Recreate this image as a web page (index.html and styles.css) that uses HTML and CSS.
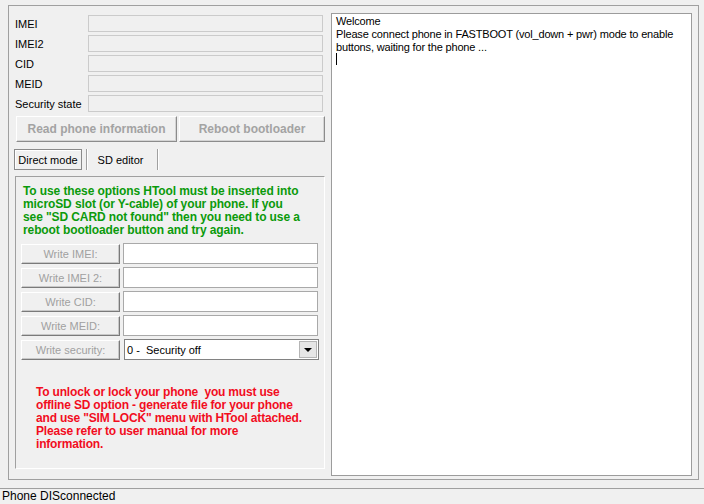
FILE: index.html
```html
<!DOCTYPE html>
<html lang="en">
<head>
    <meta charset="UTF-8">
    <title>HTool</title>
    <link rel="stylesheet" href="styles.css">
</head>
<body>
    <div class="frame">
        <div class="left-side">
            <div class="info-row"><span class="info-label">IMEI</span><span class="info-box"></span></div>
            <div class="info-row"><span class="info-label">IMEI2</span><span class="info-box"></span></div>
            <div class="info-row"><span class="info-label">CID</span><span class="info-box"></span></div>
            <div class="info-row"><span class="info-label">MEID</span><span class="info-box"></span></div>
            <div class="info-row"><span class="info-label">Security state</span><span class="info-box"></span></div>

            <div class="actions">
                <button class="action-btn read-btn" disabled>Read phone information</button>
                <button class="action-btn reboot-btn" disabled>Reboot bootloader</button>
            </div>

            <div class="tabs">
                <span class="tab tab-active">Direct mode</span>
                <span class="tab-sep"></span>
                <span class="tab">SD editor</span>
                <span class="tab-sep"></span>
            </div>

            <div class="tab-page">
                <p class="note-green">To use these options HTool must be inserted into<br>microSD slot (or Y-cable) of your phone. If you<br>see "SD CARD not found" then you need to use a<br>reboot bootloader button and try again.</p>

                <div class="write-row"><button class="write-btn" disabled>Write IMEI:</button><input class="write-input" type="text"></div>
                <div class="write-row"><button class="write-btn" disabled>Write IMEI 2:</button><input class="write-input" type="text"></div>
                <div class="write-row"><button class="write-btn" disabled>Write CID:</button><input class="write-input" type="text"></div>
                <div class="write-row"><button class="write-btn" disabled>Write MEID:</button><input class="write-input" type="text"></div>
                <div class="write-row">
                    <button class="write-btn" disabled>Write security:</button>
                    <div class="combo">
                        <span class="combo-text">0 -&nbsp; Security off</span>
                        <span class="combo-btn"><span class="combo-arrow"></span></span>
                    </div>
                </div>

                <p class="note-red">To unlock or lock your phone&nbsp; you must use<br>offline SD option - generate file for your phone<br>and use "SIM LOCK" menu with HTool attached.<br>Please refer to user manual for more<br>information.</p>
            </div>
        </div>
        <div class="log">
            Welcome<br>
            Please connect phone in FASTBOOT (vol_down + pwr) mode to enable<br>
            buttons, waiting for the phone ...
            <span class="caret"></span>
        </div>
    </div>
    <div class="status">Phone DISconnected</div>
</body>
</html>
```

FILE: styles.css
```css
* {
    box-sizing: border-box;
}
body {
    margin: 0;
    width: 704px;
    height: 504px;
    overflow: hidden;
    background-color: #f0f0f0;
    font-family: "Liberation Sans", Arial, sans-serif;
    font-size: 11px;
    color: #000;
}
.frame {
    display: flex;
    width: 691px;
    height: 475px;
    margin: 5px 0 0 8px;
    border: 1px solid #a0a0a0;
}
.left-side {
    width: 322px;
    padding: 9px 0 0 6px;
}
.info-row {
    display: flex;
    align-items: center;
    height: 17px;
    margin-bottom: 3px;
}
.info-label {
    width: 73px;
}
.info-box {
    width: 235px;
    height: 17px;
    border: 1px solid #cbcbcb;
    background-color: #f0f0f0;
}
.actions {
    display: flex;
    gap: 2px;
    margin: 4px 0 0 1px;
}
.action-btn {
    height: 26px;
    padding: 0;
    font-family: inherit;
    font-size: 12px;
    font-weight: bold;
    color: #a3a3a3;
    background-color: #f0f0f0;
    border: 1px solid;
    border-color: #fff #8c8c8c #8c8c8c #fff;
    box-shadow: inset -1px -1px 0 #d4d4d4;
}
.read-btn {
    width: 161px;
}
.reboot-btn {
    width: 146px;
}
.tabs {
    display: flex;
    height: 21px;
    margin: 7px 0 0 -1px;
}
.tab {
    display: flex;
    align-items: center;
    justify-content: center;
    width: 65px;
    height: 21px;
}
.tab-active {
    width: 68px;
    border: 1px solid #8a8a8a;
    box-shadow: inset 1px 1px 0 #fff;
}
.tab-sep {
    width: 2px;
    height: 21px;
    margin-left: 4px;
    border-left: 1px solid #a0a0a0;
    border-right: 1px solid #fff;
}
.tab-page {
    width: 310px;
    height: 293px;
    margin-top: 6px;
    padding: 8px 0 0 5px;
    border: 1px solid;
    border-color: #a0a0a0 #fff #fff #a0a0a0;
}
.note-green {
    margin: 0 0 6px 2px;
    font-size: 12px;
    font-weight: bold;
    line-height: 13px;
    letter-spacing: -0.1px;
    white-space: nowrap;
    color: #0b9a0b;
}
.write-row {
    display: flex;
    align-items: center;
    height: 21px;
    margin-bottom: 3px;
}
.write-btn {
    width: 99px;
    height: 20px;
    padding: 0;
    font-family: inherit;
    font-size: 11px;
    color: #a0a0a0;
    background-color: #f0f0f0;
    border: 1px solid;
    border-color: #fff #7a7a7a #7a7a7a #fff;
    box-shadow: inset -1px -1px 0 #c8c8c8;
}
.write-input {
    width: 195px;
    height: 21px;
    margin-left: 3px;
    border: 1px solid #a9a9a9;
    background-color: #fff;
}
.combo {
    display: flex;
    align-items: center;
    justify-content: space-between;
    width: 195px;
    height: 21px;
    margin-left: 4px;
    padding: 0 1px 0 2px;
    border: 1px solid #828282;
    background-color: #fff;
}
.combo-btn {
    display: flex;
    align-items: center;
    justify-content: center;
    width: 18px;
    height: 17px;
    background-color: #e6e6e6;
    border: 1px solid #b5b5b5;
}
.combo-arrow {
    width: 0;
    height: 0;
    border-left: 4px solid transparent;
    border-right: 4px solid transparent;
    border-top: 4px solid #000;
}
.note-red {
    margin: 26px 0 0 15px;
    font-size: 12px;
    font-weight: bold;
    line-height: 13px;
    letter-spacing: -0.18px;
    white-space: nowrap;
    color: #f20d1e;
}
.log {
    width: 361px;
    height: 463px;
    margin-top: 7px;
    padding: 1px 4px;
    line-height: 13px;
    letter-spacing: -0.17px;
    white-space: nowrap;
    background-color: #fff;
    border: 1px solid #9c9c9c;
}
.caret {
    display: block;
    width: 1px;
    height: 12px;
    margin-top: -1px;
    background-color: #000;
}
.status {
    margin-top: 8px;
    height: 16px;
    padding-left: 2px;
    font-size: 12px;
    line-height: 15px;
    border-top: 1px solid #a0a0a0;
}
```
